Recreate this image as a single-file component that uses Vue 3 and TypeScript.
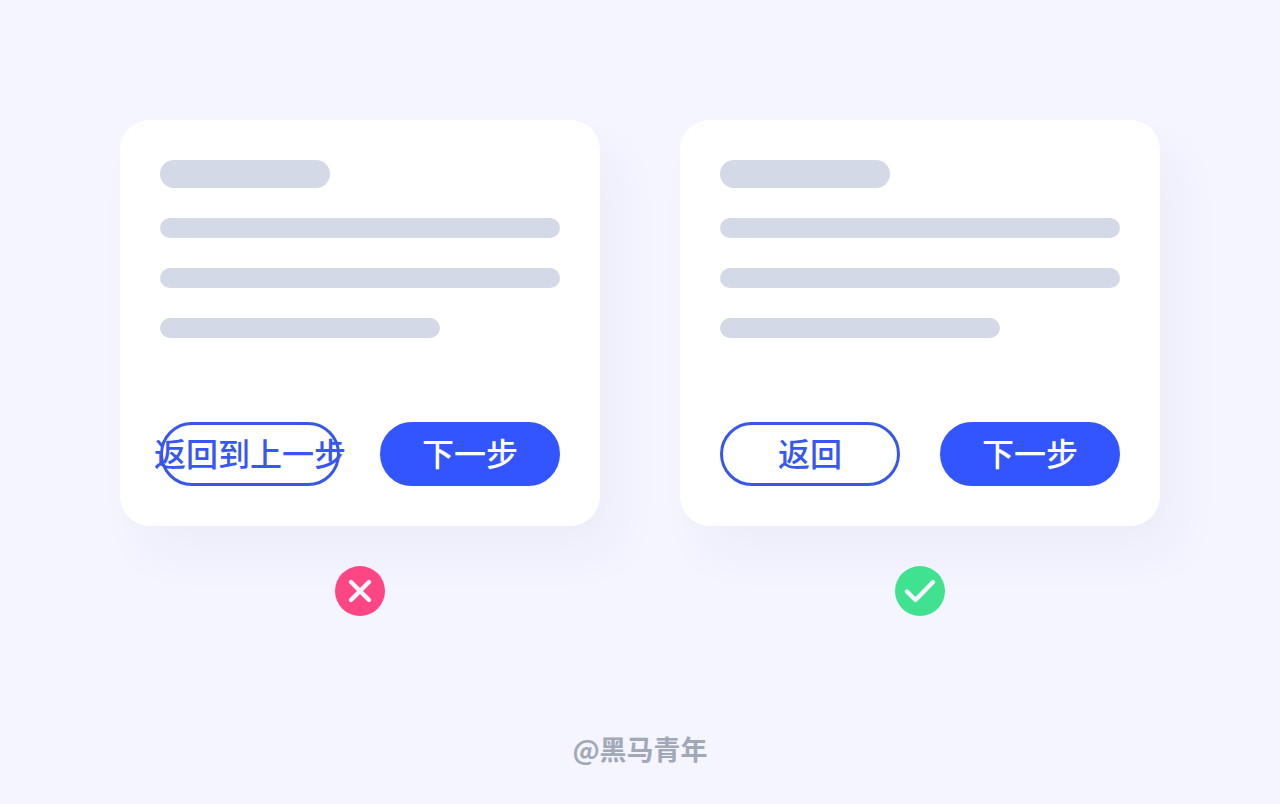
<script setup lang="ts">
interface Example {
  id: string
  back: string
  next: string
  good: boolean
}

const examples: Example[] = [
  { id: 'long', back: '返回到上一步', next: '下一步', good: false },
  { id: 'short', back: '返回', next: '下一步', good: true },
]
</script>

<template>
  <main class="page">
    <div class="examples">
      <section v-for="item in examples" :key="item.id" class="example">
        <div class="card">
          <div class="skeleton">
            <div class="bar title"></div>
            <div class="bar"></div>
            <div class="bar"></div>
            <div class="bar short"></div>
          </div>
          <div class="actions">
            <button type="button" class="btn outline">{{ item.back }}</button>
            <button type="button" class="btn filled">{{ item.next }}</button>
          </div>
        </div>
        <svg v-if="item.good" class="mark" viewBox="0 0 50 50" role="img" aria-label="正确">
          <circle cx="25" cy="25" r="25" fill="#40e290" />
          <path d="M12 25.5 20.5 34 38 16" />
        </svg>
        <svg v-else class="mark" viewBox="0 0 50 50" role="img" aria-label="错误">
          <circle cx="25" cy="25" r="25" fill="#ff4684" />
          <path d="M16 16 34 34M34 16 16 34" />
        </svg>
      </section>
    </div>
    <footer class="credit">@黑马青年</footer>
  </main>
</template>

<style>
body {
  margin: 0;
  background: #f4f5ff;
}
</style>

<style scoped>
.page {
  box-sizing: border-box;
  min-height: 100vh;
  padding: 120px 120px 35px;
  display: flex;
  flex-direction: column;
  justify-content: space-between;
  font-family: "Noto Sans CJK SC", sans-serif;
}

.examples {
  display: grid;
  grid-template-columns: 1fr 1fr;
  gap: 80px;
}

.example {
  display: flex;
  flex-direction: column;
  align-items: center;
  gap: 40px;
  min-width: 0;
}

.card {
  box-sizing: border-box;
  width: 100%;
  padding: 40px;
  border-radius: 30px;
  background: #fff;
  box-shadow: 20px 30px 50px rgba(72, 40, 130, 0.04);
}

.skeleton {
  display: flex;
  flex-direction: column;
  gap: 30px;
}

.bar {
  height: 20px;
  border-radius: 14px;
  background: #d3d9e7;
}

.title {
  width: 170px;
  height: 28px;
}

.short {
  width: 70%;
}

.actions {
  display: grid;
  grid-template-columns: 1fr 1fr;
  gap: 40px;
  margin-top: 84px;
}

.btn {
  box-sizing: border-box;
  display: flex;
  align-items: center;
  justify-content: center;
  min-width: 0;
  height: 64px;
  padding: 0 0 4px;
  border: 3px solid #3255ff;
  border-radius: 32px;
  font: 500 32px/48px "Noto Sans CJK SC", sans-serif;
  white-space: nowrap;
  cursor: pointer;
}

.outline {
  border-color: #3757e9;
  background: transparent;
  color: #3757f0;
}

.filled {
  background: #3255ff;
  color: #fff;
}

.mark {
  display: block;
  width: 50px;
  height: 50px;
}

.mark path {
  fill: none;
  stroke: #f4f5ff;
  stroke-width: 4.4;
  stroke-linecap: round;
  stroke-linejoin: round;
}

.credit {
  font-size: 27px;
  line-height: 40px;
  font-weight: 700;
  text-align: center;
  color: #a1a8b8;
}
</style>
